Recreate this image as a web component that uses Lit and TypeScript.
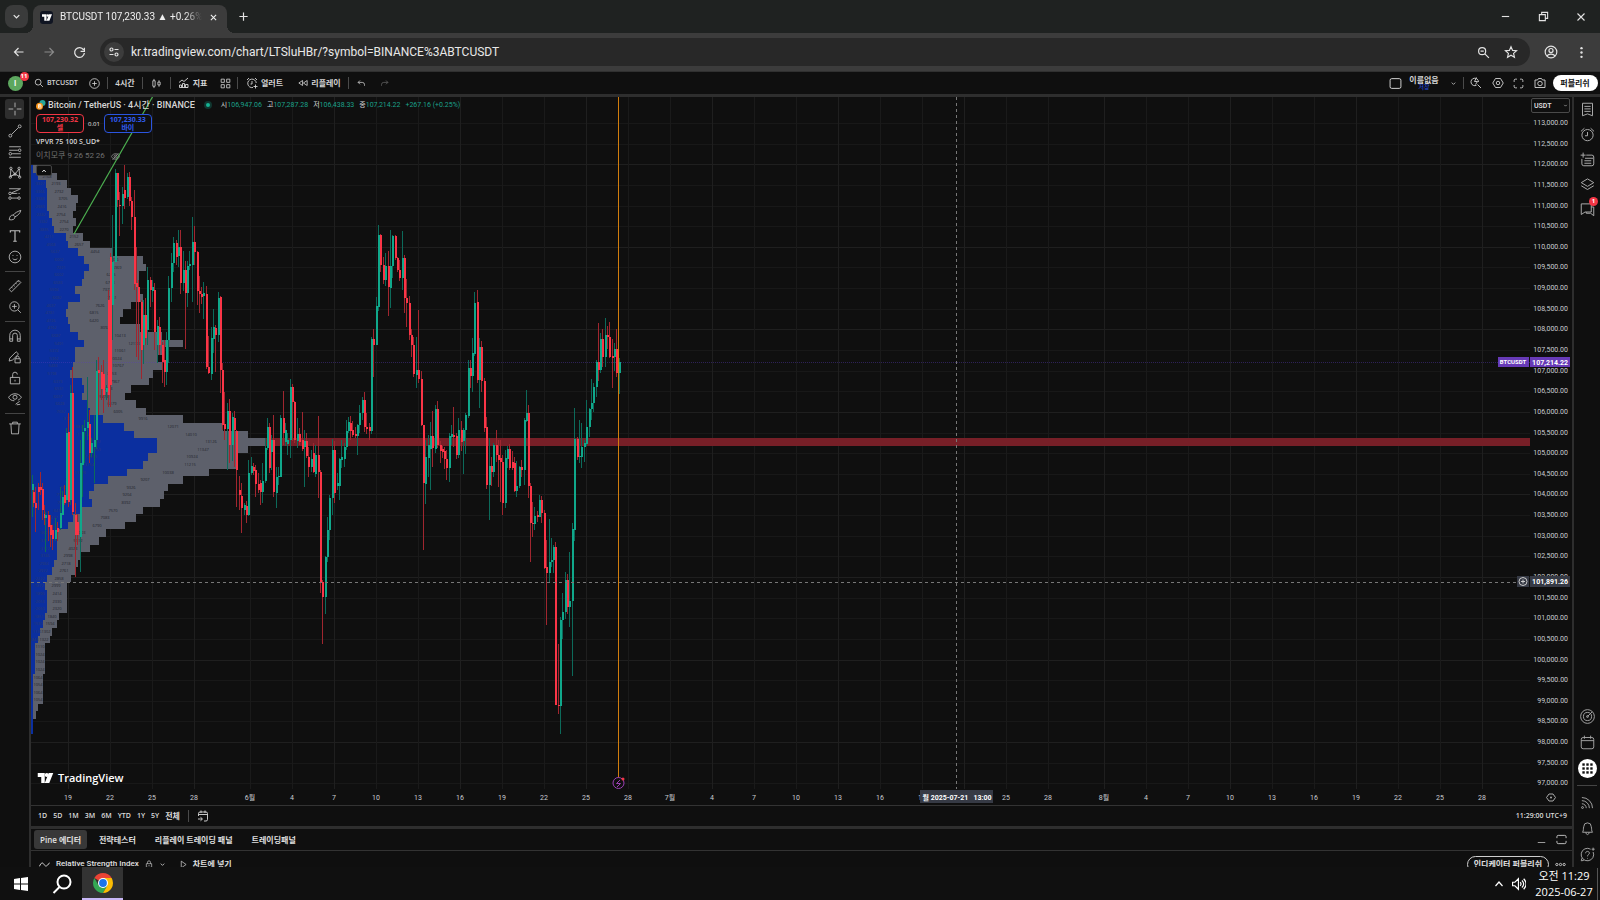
import { LitElement, html, css, svg, nothing } from "lit";
import { customElement } from "lit/decorators.js";

/* ---------- icons, drawn on a 24 unit canvas ---------- */
const ICONS: Record<string, unknown> = {
  chevron: svg`<path d="M6 9l6 6 6-6"/>`,
  chevronUp: svg`<path d="M5 16l7-8 7 8"/>`,
  close: svg`<path d="M5 5l14 14M19 5L5 19"/>`,
  plus: svg`<path d="M12 3v18M3 12h18"/>`,
  minus: svg`<path d="M4 12h16"/>`,
  low: svg`<path d="M2 20h20"/>`,
  restore: svg`<path d="M3 8h13v13H3zM8 8V3h13v13h-5"/>`,
  back: svg`<path d="M21 12H4M11 4l-8 8 8 8"/>`,
  forward: svg`<path d="M3 12h17M13 4l8 8-8 8"/>`,
  reload: svg`<path d="M19.5 7A9 9 0 1 0 21 13M21 3v7h-7"/>`,
  tune: svg`<circle cx="7" cy="7" r="3"/><path d="M13 7h8M3 17h8"/><circle cx="17" cy="17" r="3"/>`,
  zoomOut: svg`<circle cx="9.5" cy="9.5" r="6.5"/><path d="M14.5 14.5L22 22M6.5 9.5h6"/>`,
  star: svg`<path d="M12 3l2.700 6.200 6.800.6-5.100 4.500 1.500 6.600L12 17.400 6.100 20.900l1.500-6.600L2.500 9.800l6.800-.6z"/>`,
  user: svg`<circle cx="12" cy="12" r="10"/><circle cx="12" cy="9.500" r="3.500"/><path d="M5 18.500c3-4 11-4 14 0"/>`,
  dots: svg`<g fill="currentColor" stroke="none"><circle cx="12" cy="4" r="2.200"/><circle cx="12" cy="12" r="2.200"/><circle cx="12" cy="20" r="2.200"/></g>`,
  search: svg`<circle cx="10" cy="10" r="7"/><path d="M15 15l6.500 6.500"/>`,
  addCircle: svg`<circle cx="12" cy="12" r="10.500"/><path d="M12 7v10M7 12h10"/>`,
  candles: svg`<path d="M4 6h5v12H4zM6.500 2v4M6.500 18v4M15 9h5v6h-5zM17.500 5v4M17.500 15v4"/>`,
  indicators: svg`<path d="M3 21v-5h4v5M9 21v-8h4v8M15 21v-6h5v6zM2 11l6-5 4 3 8-7M3 21h17"/>`,
  grid: svg`<path d="M2.500 2.500h7v7h-7zM14.500 2.500h7v7h-7zM2.500 14.500h7v7h-7zM14.500 14.500h7v7h-7z"/>`,
  alarm: svg`<circle cx="12" cy="13" r="9"/><path d="M12 8v6H8M1.500 7l5.500-5M17 2l5.500 5"/>`,
  alarmAdd: svg`<path d="M14 21a8.500 8.500 0 1 1 6.500-9M12 8v6H9M2 6l4-4M18 2l4 4M19 15v8M15 19h8"/>`,
  rewind: svg`<path d="M11 6v12l-9-6zM22 6v12l-9-6z"/>`,
  undo: svg`<path d="M8 4L3 9l5 5M3 9h11a6 6 0 0 1 6 6v3"/>`,
  redo: svg`<path d="M16 4l5 5-5 5M21 9H10a6 6 0 0 0-6 6v3"/>`,
  square: svg`<rect x="2" y="3" width="20" height="18" rx="3"/>`,
  quick: svg`<path d="M17 10a7.500 7.500 0 1 0-4 6.500M15 15l7 7M13 1l-4 8h6l-4 6"/>`,
  hex: svg`<path d="M7 3h10l5.500 9L17 21H7l-5.500-9z"/><circle cx="12" cy="12" r="3.500"/>`,
  full: svg`<path d="M2.500 8.500v-3a3 3 0 0 1 3-3h3M15.500 2.500h3a3 3 0 0 1 3 3v3M21.500 15.500v3a3 3 0 0 1-3 3h-3M8.500 21.500h-3a3 3 0 0 1-3-3v-3"/>`,
  frame: svg`<path d="M2 9V6a3 3 0 0 1 3-3h14a3 3 0 0 1 3 3v3M22 15v3a3 3 0 0 1-3 3H5a3 3 0 0 1-3-3v-3"/>`,
  camera: svg`<path d="M2 6h5l2-3h6l2 3h5v15H2z"/><circle cx="12" cy="13" r="4.500"/>`,
  cross: svg`<path d="M12 1v8M12 15v8M1 12h8M15 12h8"/>`,
  trend: svg`<circle cx="4" cy="20" r="2.500"/><circle cx="20" cy="4" r="2.500"/><path d="M6 18L18 6"/>`,
  fib: svg`<path d="M2 3h20M2 9h15M7 15h15M2 21h20"/><circle cx="20" cy="9" r="2.200"/><circle cx="4" cy="15" r="2.200"/>`,
  pattern: svg`<path d="M4 18L5 5l7 9 7-9 1 13-8-4zM4 18l8-4"/><circle cx="4" cy="19" r="2"/><circle cx="5" cy="4" r="2"/><circle cx="12" cy="14" r="2"/><circle cx="19" cy="4" r="2"/><circle cx="20" cy="19" r="2"/>`,
  forecast: svg`<path d="M2 3h20M6 11h8M6 19h11M6 10l14-6"/><circle cx="3.500" cy="11" r="2.200"/><circle cx="3.500" cy="19" r="2.200"/><circle cx="19" cy="19" r="2.200"/><path d="M14 11h8" stroke-dasharray="2 2"/>`,
  brush: svg`<path d="M2 20c1-6 3-8 7-8l3 3c0 5-5 6-10 5zM9 12c3-4 8-6 13-8-1 5-5 9-10 11"/>`,
  text: svg`<path d="M4 6V3h16v3M12 3v18M9 21h6" stroke-width="2"/>`,
  smile: svg`<circle cx="12" cy="12" r="10"/><path d="M8 14.500c2 3 6 3 8 0M8.500 8.500v1.500M15.500 8.500v1.500"/>`,
  ruler: svg`<path d="M2 18L18 2l4 4L6 22zM6 14l2 2M9.500 10.500l2 2M13 7l2 2M16.500 3.500l2 2"/>`,
  zoomIn: svg`<circle cx="11" cy="11" r="8"/><path d="M17 17l5 5M7 11h8M11 7v8"/>`,
  magnet: svg`<path d="M3 21V11a9 9 0 0 1 18 0v10h-5V11a4 4 0 0 0-8 0v10zM3 17h5M16 17h5"/>`,
  penLock: svg`<path d="M2 19L3 14 14 3l4 4L8 17zM12 15h9v7h-9zM14 15v-2a2.500 2.500 0 0 1 5 0v2"/>`,
  lock: svg`<path d="M4 11h16v11H4zM8 11V6a4 4 0 0 1 8 0"/><path d="M12 15v3"/>`,
  padlock: svg`<path d="M4 11h16v11H4zM7.500 11V7a4.500 4.500 0 0 1 9 0v4M12 15v3"/>`,
  eye: svg`<path d="M1 9c5-8 17-8 22 0-2 3-4 4-6 5M1 9c2 4 5 6 10 6"/><circle cx="12" cy="9" r="3.500"/><path d="M13 21l7-5M15 22l6-1"/>`,
  trash: svg`<path d="M2 5h20M8 5V2h8v3M5 5l1 17h12l1-17"/>`,
  list: svg`<path d="M4 2h16v20l-8-3-8 3zM7 7h10M7 11h10M7 15h10"/>`,
  news: svg`<path d="M10 5h9a3 3 0 0 1 3 3v11a3 3 0 0 1-3 3H6a3 3 0 0 1-3-3v-8M8 10h13M7 14h11M7 18h11M5 1v8M1 5h8"/>`,
  layers: svg`<path d="M12 3l10 6-10 6L2 9zM2 14l10 6 10-6"/>`,
  chat: svg`<path d="M2 3h16v13H8l-6 4zM18 8h4v14l-5-4h-7v-2"/>`,
  target: svg`<circle cx="12" cy="12" r="11"/><circle cx="12" cy="12" r="6.500"/><circle cx="12" cy="12" r="1.500"/><path d="M12 12l7.500-7.500"/>`,
  calendar: svg`<rect x="2" y="4" width="20" height="18" rx="3"/><path d="M2 9h20M7 1v5M17 1v5"/>`,
  apps: svg`<circle cx="12" cy="12" r="12" fill="#fff" stroke="none"/><g fill="#0f0f0f" stroke="none">${[5.5, 10.5, 15.5].map(y => [5.5, 10.5, 15.5].map(x => svg`<rect x=${x} y=${y} width="3" height="3"/>`))}</g>`,
  feed: svg`<circle cx="4" cy="20" r="1.500"/><path d="M3 14a7 7 0 0 1 7 7M3 9a12 12 0 0 1 12 12M3 4a17 17 0 0 1 17 17"/>`,
  bell: svg`<path d="M4 18c2-2 1-6 2-9a6 6 0 0 1 12 0c1 3 0 7 2 9zM9.500 18c0 5 5 5 5 0"/>`,
  help: svg`<path d="M21 8a10 10 0 1 1-4-4.500M3 18l-1 4 4-.5M9 10c0-4 6-4 6 0 0 2-3 2-3 5M12 17.500v1M21 1v5M18.500 3.500h5"/>`,
  goTo: svg`<path d="M3 12V7a3 3 0 0 1 3-3h12a3 3 0 0 1 3 3v12a3 3 0 0 1-3 3h-4M3 9h18M8 1v5M16 1v5M2 18h8M7 14.500l4 3.500-4 3.500"/>`,
  wave: svg`<path d="M1 16c4-9 7-9 10-4s6 5 12-4"/>`,
  play: svg`<path d="M6 3l13 9-13 9z"/>`,
  eyeOff: svg`<path d="M1 12c5-10 17-10 22 0-5 10-17 10-22 0z"/><circle cx="12" cy="12" r="4"/><path d="M4 21L20 3"/>`,
  more: svg`<circle cx="4" cy="12" r="2.500"/><circle cx="12" cy="12" r="2.500"/><circle cx="20" cy="12" r="2.500"/>`,
  speaker: svg`<path d="M1 9h4l6-6v18l-6-6H1zM14 9c2 2 2 4 0 6M17 6c4 4 4 8 0 12M20 3c5.500 6 5.500 12 0 18"/>`,
};
const icon = (name: string, size = 14, weight = 1.6) => html`<svg width=${size} height=${size} viewBox="0 0 24 24"
  fill="none" stroke="currentColor" stroke-width=${weight} aria-hidden="true">${ICONS[name]}</svg>`;
const tvMark = svg`<path d="M0 0h14v20H7V8H0zM22 0h9l-8 20h-9z"/><circle cx="18" cy="4" r="4"/>`;

/* ---------- market data: colour, x, high, body top, body bottom, low ---------- */
const CANDLES = `r33,486,492,503,507 g32,475,484,490,517 r35,487,503,508,532 r38,483,487,492,510 r40,472,487,490,495 r42,483,489,510,520
r44,505,514,518,525 g45,512,515,518,552 r48,511,515,527,541 r50,515,525,535,547 r52,525,530,539,550 g55,518,530,539,541 r57,522,528,532,541
g60,487,513,528,530 g62,491,497,515,515 r64,485,495,503,505 g66,428,433,500,503 r68,413,432,502,507 g70,385,393,500,505 r72,367,393,512,515
r75,503,515,535,577 r77,514,522,535,545 g80,440,463,537,572 g82,425,432,465,497 g84,420,428,431,463 g87,377,422,428,440 r89,410,424,453,463
g91,438,443,453,457 g94,415,440,447,483 g96,360,371,440,449 r98,357,370,373,415 r101,365,372,389,400 r103,360,374,395,413 g106,385,388,392,400
r108,290,300,395,407 r110,253,257,385,407 g112,215,262,305,340 g115,169,173,262,262 r117,173,173,200,207 r119,192,205,206,236 g122,187,194,206,224
r124,165,190,198,209 g127,173,177,197,199 r129,172,177,201,206 r131,197,201,217,230 r134,190,217,284,290 r136,247,283,287,357 r138,280,287,302,360
r141,300,302,350,379 g143,300,315,345,364 r145,298,315,338,345 g147,267,280,330,345 r150,277,280,290,307 g152,280,287,291,302 r154,283,290,332,350
g157,320,326,345,363 r159,317,327,345,355 r162,342,345,362,383 r164,340,360,372,387 g166,332,340,372,385 g168,276,288,340,363 g171,253,263,288,302
g173,237,243,263,272 r176,240,243,257,265 g178,230,247,256,267 r180,230,247,283,294 g183,251,270,283,291 r185,261,270,293,349 g187,261,266,293,307
g189,251,264,266,270 g192,217,242,265,302 r194,226,242,252,265 r197,251,252,291,305 r199,276,291,294,313 r201,287,294,297,304 g203,282,293,296,319
r206,286,294,367,369 r208,336,367,373,374 g211,327,338,374,380 g213,309,327,339,353 r215,325,328,335,372 g218,292,298,335,342 r220,296,297,370,393
r222,363,370,425,430 r224,392,424,429,440 g227,403,411,429,470 r229,399,411,445,463 g232,413,417,445,461 r234,411,418,430,467 r236,430,431,470,507
r239,476,490,495,510 r241,483,496,508,533 g244,503,505,510,515 r246,501,506,515,523 g248,460,473,515,516 g251,457,466,473,475 r253,463,467,471,475
r255,465,470,484,497 r258,473,484,490,493 r260,480,483,492,505 g262,463,481,492,503 g265,438,448,481,483 g267,418,427,448,450 r269,423,427,468,473
g271,435,440,452,470 r273,415,440,492,497 g276,467,477,493,508 g278,467,476,477,485 g280,415,418,477,477 r283,391,418,433,445 g285,423,430,442,446
g287,433,440,444,455 g290,379,387,440,458 r292,384,387,402,441 r294,401,402,440,443 g297,418,434,441,448 r299,428,434,442,445 r302,412,440,449,451
g304,430,441,447,487 r306,433,441,456,458 r308,447,457,467,477 g311,450,459,467,472 r313,443,453,472,473 g315,445,455,474,477 r318,416,455,472,498
r320,470,472,582,593 r322,580,582,597,644 g325,556,557,597,614 g327,517,530,557,562 g329,495,498,530,540 g332,439,450,498,515 r334,441,450,493,503
g337,473,483,486,490 g339,458,459,486,500 g341,440,457,460,468 g344,443,447,459,467 g346,420,431,447,450 g348,417,422,431,433 r350,416,423,431,440
r352,421,430,435,437 r355,427,434,436,438 g357,424,425,436,455 g359,405,413,425,433 g362,397,400,413,420 r364,392,400,427,432 r366,413,427,429,434
r369,423,427,431,440 g371,337,339,431,434 r373,329,339,345,377 g376,297,306,345,345 g378,225,235,307,311 r380,234,235,265,272 r383,257,265,280,284
g385,253,266,280,286 r388,251,266,287,316 g390,230,266,288,308 g392,235,236,266,278 r395,235,236,258,260 r397,257,258,270,272 r399,260,270,278,281
g402,231,258,278,290 r404,255,258,298,313 r406,279,298,303,327 r409,296,303,335,340 r411,329,335,345,357 r413,337,345,374,377 g416,337,370,375,388
r418,310,370,379,383 r421,371,379,425,426 r423,425,425,483,550 g425,440,457,484,504 g428,435,445,458,477 g430,422,436,449,490 r432,411,436,448,467
g435,405,409,449,453 r437,401,409,445,448 r440,441,445,451,463 r442,446,449,452,458 r444,447,451,459,469 r446,450,459,468,480 g449,433,436,468,482
g451,425,434,437,445 r453,407,435,437,447 r456,433,436,455,459 g458,418,430,455,458 r461,421,430,442,451 g463,428,430,441,474 g465,413,415,430,454
g468,360,368,416,418 r470,360,368,376,388 g472,338,353,376,392 g474,292,303,354,356 r477,290,302,380,383 g479,338,347,380,408 r481,341,347,381,392
r484,378,381,428,432 r486,417,427,485,489 g489,438,466,485,520 r491,457,466,472,486 g493,443,445,472,477 r496,430,445,455,462 r498,440,455,460,487
r500,440,458,462,502 r502,455,462,503,515 g505,450,458,503,508 g507,446,449,459,468 r509,444,449,468,470 r512,451,462,468,470 r514,457,463,491,492
g516,461,486,491,497 g519,466,467,486,488 r521,460,467,470,477 g524,418,420,470,485 g526,390,413,421,422 r528,405,413,486,498 r530,483,486,523,562
r532,502,523,524,537 g534,507,516,524,530 r537,511,515,517,522 g539,495,500,517,517 r541,496,500,513,523 r544,510,513,568,569 r546,540,567,573,625
g549,519,562,573,583 g551,538,560,562,567 g553,545,547,560,573 r555,542,547,705,705 r558,644,705,706,714 g560,617,620,706,734 g562,593,612,620,639
g565,572,580,612,619 r567,574,580,607,614 g569,552,601,607,627 g572,523,529,601,676 g574,408,439,530,541 r577,437,439,457,460 g579,420,456,457,463
g581,423,447,457,468 g584,440,443,447,462 g586,400,427,444,446 g589,408,409,427,437 g591,379,403,409,420 g593,383,387,403,412 g596,360,362,387,397
r598,323,362,370,381 g600,333,339,370,373 r602,329,339,357,367 g605,318,335,357,367 r607,326,335,337,349 r609,322,337,357,358 r612,339,356,358,388
g614,343,349,357,371 r616,329,349,373,377 g619,358,362,373,394`
  .split(/\s+/).map(t => ({ up: t[0] === "g", v: t.slice(1).split(",").map(Number) }));

/* volume profile, three units per pixel: blue end, grey end, grey volume, blue volume */
const PROFILE = `100,115 113,171,2168 138,200,2193,3327 140,213,2732,3366 140,235,3705,3388 140,229,2416,2983 147,219,2754,2242 156,229,2754,3382 163,219,2270,3835
197,248,2152,4211 205,270,2657,4568 233,339,4454,5637 252,430,7376,6002 267,437,6969,7221 252,416,6235,6602 246,416,6703,6583 226,418,7373,5594
240,430,7461,6082 205,394,7626,4637 198,368,6815,4781 205,360,6420,4726 210,420,8092,4762 234,485,10413,6087 252,549,12133,5491 226,492,11061,5374
226,472,10024,5362 220,485,10767,5483 211,458,8153,5198 246,446,7967,6373 252,394,6133,6531 246,375,5473,6657 262,409,6179,6628 269,437,6005,7082
309,549,9916,8161 372,668,12071,10870 401,744,14010,11266 471,795,13126,16402 471,744,11347,16069 444,708,10924,14639 429,708,11215,13754
380,626,10038,11120 323,549,9207,9262 282,505,9326,7893 268,492,9204,7133 275,480,8392,7402 246,430,7570,6412 218,409,7083,5477 205,375,6790,4931
170,318,5703,3694 170,298,5112,3761 170,270,4023,3722 170,240,2998,3746 163,235,2718,2984 157,228,2761,2972 141,213,2858,2222 135,200,2999,1872
141,200,2414,1890 141,200,2330,2053 141,200,2320,2050 135,177,1840,1851 130,170,1594,1530 120,157,1302,1136 113,150,1322,848 106,134,1110 106,134,1024
106,134,1024 106,134,1024 99,129,1064 99,129,1054 99,129,1064 99,129,1054 99,114 99,107 99,99 99,99`
  .split(/\s+/).map(t => t.split(",").map(Number));

const DAY = 14;
const START = 68;
const DATES: [string, number][] = [];
{
  const labels = "19 22 25 28 6월 4 7 10 13 16 19 22 25 28 7월 4 7 10 13 16 19 22 25 28 8월 4 7 10 13 16 19 22 25 28".split(" ");
  let day = 0;
  labels.forEach((l, i) => {
    if (i) day += l === "6월" || l === "8월" ? 4 : 3;
    DATES.push([l, START + day * DAY]);
  });
}
const CURSOR = 957;
const ROW = 20.635;
const PRICES = Array.from({ length: 33 }, (_, i) => [113000 - i * 500, 123 + i * ROW] as const);
const fmt = (n: number) => n.toLocaleString("en-US", { minimumFractionDigits: 2 });

@customElement("price-chart")
class PriceChart extends LitElement {
  static styles = css`
    :host { display: block; position: relative; flex: 1; min-height: 0; overflow: hidden; }
    svg { flex: none; display: block; }
    .canvas { position: absolute; width: 100%; height: 100%; }
    .axis { font: 7px Roboto, "Noto Sans CJK KR", sans-serif; fill: #c9cbd0; }
    .strong { font-weight: 700; fill: #fff; }
    .small { font-size: 6px; }
    .mid { text-anchor: middle; }
    .volume { font: 4px "Open Sans", sans-serif; fill: #23252c; text-anchor: middle; }
    .dim { fill: #2a3a74; }
    .legend { position: absolute; left: 5px; top: 3px; display: flex; flex-direction: column; align-items: flex-start; gap: 4px;
      color: #d6d6d6; font: 7px/10px "Open Sans", "Noto Sans CJK KR", sans-serif; }
    .row { display: flex; align-items: center; height: 10px; white-space: nowrap; }
    .coins { margin-right: 2px; }
    .title { font: 500 9px/10px Roboto, "Noto Sans CJK KR", sans-serif; }
    .live { width: 4px; height: 4px; border: 2px solid #10362f; border-radius: 50%; background: #16b394; margin: 0 9px; }
    .ohlc { display: flex; gap: 5px; font-family: Roboto, "Noto Sans CJK KR", sans-serif; }
    .ohlc b { color: #1ba08a; font-weight: 400; }
    .trade { display: flex; align-items: center; gap: 4px; font-size: 6px; color: #eee; }
    .quote { width: 48px; height: 19px; border: 1px solid #f23645; border-radius: 4px; background: #0f0f0f; color: #f23645;
      font: 700 7px/8px "Open Sans", "Noto Sans CJK KR", sans-serif; padding: 0; display: flex; flex-direction: column; align-items: center; justify-content: center; }
    .quote.buy { border-color: #2b55e0; color: #2f5cf0; }
    .study { font-weight: 600; }
    .hidden { color: #6f6f6f; gap: 6px; font-size: 8px; font-family: Roboto, "Noto Sans CJK KR", sans-serif; }
    .hidden svg { color: #999; }
    .fold { width: 16px; height: 11px; border: 1px solid #444; border-radius: 2px; background: #0f0f0f; color: #ddd; padding: 0;
      display: flex; align-items: center; justify-content: center; }
    .currency { position: absolute; top: 1px; right: 2px; width: 39px; height: 15px; appearance: none; border: 1px solid #4a4a4a;
      border-radius: 2px; background: #0f0f0f; color: #ddd; font: 600 7px Roboto, sans-serif; padding: 0 2px; }
    .arrow { position: absolute; top: 6px; right: 4px; color: #ccc; pointer-events: none; }
    .brand { position: absolute; left: 6px; bottom: 20px; display: flex; align-items: center; gap: 4px; color: #fff; fill: #fff;
      font: 600 11px/14px "Open Sans", sans-serif; text-decoration: none; }
  `;

  private drawing() {
    const labels = DATES.filter(([, x]) => Math.abs(x - CURSOR) > 30);
    return svg`
      <g shape-rendering="crispEdges">
        ${PRICES.map(([p, y]) => svg`<rect x="31" y=${Math.round(y)} width="1499" height="1" fill=${p % 2000 === 0 ? "#1f1f1f" : "#181818"}/>`)}
        ${DATES.map(([, x], i) => svg`<rect x=${x} y="97" width="1" height="692" fill=${i % 3 ? "#1a1a1a" : "#1f1f1f"}/>`)}
        <rect x="265" y="438" width="1265" height="8" fill="#771f27"/>
        ${PROFILE.map(([b, g], i) => {
          const y = Math.round(165 + i * 7.59);
          const h = Math.round(165 + (i + 1) * 7.59) - y;
          return svg`<rect x="31" y=${y} width=${Math.round(g / 3) - 31} height=${h} fill="#5d606b"/>
            <rect x="31" y=${y} width=${Math.round(b / 3) - 31} height=${h} fill="#0b2f9f"/>`;
        })}
      </g>
      ${PROFILE.map(([b, g, n, m], i) => svg`
        ${n ? svg`<text class="volume" x=${Math.round((b + g) / 6)} y=${Math.round(170 + i * 7.59)}>${n}</text>` : nothing}
        ${m ? svg`<text class="volume dim" x=${Math.round((b + 93) / 6) + 1} y=${Math.round(170 + i * 7.59)}>${m}</text>` : nothing}`)}
      <path d="M31 362.500H1530" stroke="#5b3bc0" stroke-opacity=".4" stroke-dasharray="1 1"/>
      <g shape-rendering="crispEdges">
        ${CANDLES.map(({ up, v: [x, h, t, b, l] }) => svg`
          <rect x=${x} y=${h} width="1" height=${l - h} fill=${up ? "#0c6a5a" : "#a0262f"}/>
          <rect x=${x} y=${t} width="2" height=${Math.max(1, b - t)} fill=${up ? "#10a88b" : "#fb3547"}/>`)}
      </g>
      <path d="M74 234L153 96" stroke="#4caf50" stroke-width="1.200"/>
      <rect x="618" y="97" width="1" height="681" fill="#d17d0d"/>
      <path d="M31 582.500H1530M956.500 97V789" stroke="#777" stroke-dasharray="3 3" fill="none"/>
      <g fill="none" stroke="#9c3fb5"><circle cx="618.500" cy="783" r="5.500" fill="#0f0f0f"/><path d="M620 780l-3.500 3.500h4l-3.500 3.500"/></g>
      <circle cx="623" cy="779" r="1.500" fill="#f23645"/>
      <rect x="1530" y="97" width="60" height="708" fill="#0f0f0f"/>
      ${PRICES.map(([p, y]) => svg`<text class="axis" x="1568" text-anchor="end" y=${Math.round(y + 2)}>${fmt(p)}</text>`)}
      ${labels.map(([l, x]) => svg`<text class="axis mid" x=${x} y="800">${l}</text>`)}
      <rect x="920" y="790" width="73" height="13" fill="#363a45"/>
      <text class="axis strong mid" x=${CURSOR} y="800" xml:space="preserve">월 2025-07-21   13:00</text>
      <rect x="1498" y="357" width="31" height="10" fill="#673ab7"/><rect x="1530" y="357" width="40" height="10" fill="#673ab7"/>
      <text class="axis strong small mid" x="1513" y="364">BTCUSDT</text>
      <text class="axis strong" x="1568" text-anchor="end" y="365">107,214.22</text>
      <rect x="1517" y="576" width="12" height="11" fill="#363a45"/><rect x="1530" y="576" width="40" height="11" fill="#363a45"/>
      <g fill="none" stroke="#ccc"><circle cx="1523" cy="581.500" r="4"/><path d="M1521 581.500h4M1523 579.500v4"/></g>
      <text class="axis strong" x="1568" text-anchor="end" y="584">101,891.26</text>
      <path d="M1549 794h4l2.500 3.500-2.500 3.500h-4l-2.500-3.500z" fill="none" stroke="#aaa"/><circle cx="1551" cy="797.500" r="1" fill="#aaa"/>`;
  }

  render() {
    return html`
      <svg class="canvas" role="img" aria-label="BTCUSDT 4시간 차트"><g transform="translate(-31 -97)">${this.drawing()}</g></svg>
      <div class="legend">
        <div class="row">
          <svg class="coins" width="10" height="10" viewBox="0 0 20 20"><circle cx="13" cy="6" r="6" fill="#26a69a"/><circle cx="7" cy="12.500" r="7" fill="#f7931a"/><path d="M5 9h3.500c2 0 2 3 0 3H5h4c2 0 2 4 0 4H5z" fill="none" stroke="#fff" stroke-width="1.500"/></svg>
          <span class="title">Bitcoin / TetherUS · 4시간 · BINANCE</span><i class="live"></i>
          <span class="ohlc"><span>시<b>106,947.06</b></span><span>고<b>107,287.28</b></span><span>저<b>106,438.33</b></span><span>종<b>107,214.22</b></span><b>+267.16 (+0.25%)</b></span>
        </div>
        <div class="trade">
          <button class="quote">107,230.32<span>셀</span></button>0.01<button class="quote buy">107,230.33<span>바이</span></button>
        </div>
        <div class="row study">VPVR 75 100 S_UD*</div>
        <div class="row hidden">이치모쿠 9 26 52 26 ${icon("eyeOff", 9, 2)}</div>
        <button class="fold" aria-label="접기">${icon("chevronUp", 6, 4)}</button>
      </div>
      <select class="currency" aria-label="통화"><option>USDT</option></select><span class="arrow">${icon("chevron", 5, 3)}</span>
      <a class="brand" href="#"><svg width="17" height="10" viewBox="0 0 31 20">${tvMark}</svg>TradingView</a>`;
  }
}

@customElement("app-root")
class AppRoot extends LitElement {
  static styles = css`
    :host { display: flex; flex-direction: column; height: 100vh; overflow: hidden; background: #0f0f0f; color: #dbdbdb;
      font: 7px/10px "Open Sans", "Noto Sans CJK KR", sans-serif; }
    button { font: inherit; color: inherit; background: none; border: 0; padding: 0; display: flex; align-items: center; justify-content: center; white-space: nowrap; }
    svg { flex: none; display: block; }
    .grow { flex: 1; }
    .ko { font-size: 8px; }
    .strip { height: 33px; background: #1f2221; display: flex; align-items: flex-start; color: #e3e3e3; flex: none; }
    .tabmenu { width: 23px; height: 23px; border-radius: 8px; background: #3a3b3b; margin: 5px; }
    .tab { position: relative; width: 194px; height: 28px; margin-top: 5px; border-radius: 8px 8px 0 0; background: #3c3c3c; display: flex; align-items: center;
      font-size: 11px; padding: 0 9px 4px 7px; gap: 7px; box-sizing: border-box; color: #eee; }
    .tab::before, .tab::after { content: ""; position: absolute; bottom: 0; width: 8px; height: 8px; }
    .tab::before { left: -8px; background: radial-gradient(circle at 0 0, transparent 8px, #3c3c3c 8px); }
    .tab::after { right: -8px; background: radial-gradient(circle at 100% 0, transparent 8px, #3c3c3c 8px); }
    .favicon { width: 13px; height: 13px; border-radius: 3px; background: #101522; fill: #fff; display: flex; align-items: center; justify-content: center; }
    .tabtitle { flex: 1; overflow: hidden; white-space: nowrap; font: 10px/16px Roboto, sans-serif; mask-image: linear-gradient(90deg, #000 88%, transparent); }
    .newtab { width: 32px; height: 33px; }
    .window { width: 38px; height: 33px; }
    .nav { height: 39px; background: #3c3c3c; display: flex; align-items: center; flex: none; color: #e3e3e3; padding: 0 4px 0 4px; border-bottom: 1px solid #303030; box-sizing: border-box; }
    .nav > button { width: 30px; height: 28px; }
    .nav > button:disabled { color: #8a8a8a; }
    .omni { flex: 1; height: 28px; border-radius: 14px; background: #282828; display: flex; align-items: center; margin: 0 6px; padding: 0 6px 0 4px; }
    .omni button { width: 27px; height: 20px; }
    .omni .site { width: 20px; border-radius: 50%; background: #3c3c3c; }
    .url { flex: 1; min-width: 0; background: none; border: 0; outline: 0; color: #e8e8e8; font: 12px/20px Roboto, sans-serif; padding: 0 7px; }
    .top { height: 22px; display: flex; align-items: center; flex: none; background: #0f0f0f; font-weight: 600; color: #d5d5d5; }
    .tools { display: grid; grid-template-columns: 30px 52px 25px 1px 34px 1px 27px 1px 43px 23px 1px 53px 57px 1px 25px 20px; justify-items: center; align-items: center; }
    .tools button, .actions button { gap: 3px; }
    .bar { width: 1px; height: 12px; background: #4a4a4a; }
    .me { position: relative; width: 15px; height: 15px; border-radius: 50%; background: #5da75f; color: #fff; font-size: 9px; }
    .badge { position: absolute; top: -4px; right: -6px; min-width: 7px; height: 9px; padding: 0 1px; border-radius: 5px; background: #f23645; color: #fff; font: 700 6px/9px "Open Sans", sans-serif; text-align: center; }
    .faint { color: #666; }
    .actions { display: grid; grid-template-columns: 20px 38px 20px 1px 23px 21px 21px 21px 50px; justify-items: center; align-items: center; }
    .layout { display: flex; flex-direction: column; line-height: 8px; align-items: center; }
    .layout button { color: #2450e8; font-size: 6px; line-height: 6px; font-weight: 400; }
    .publish { background: #fff; color: #111; border-radius: 8px; width: 45px; height: 16px; font-weight: 700; }
    .work { flex: 1; display: flex; min-height: 0; border-top: 3px solid #2e2e2e; }
    .left { width: 29px; border-right: 2px solid #2e2e2e; display: flex; flex-direction: column; align-items: center; padding-top: 2px; flex: none; color: #bdbdbd; }
    .left button { width: 19px; height: 21px; border-radius: 3px; flex: none; }
    .left .on { background: #2e2e2e; height: 20px; margin-bottom: 1px; }
    .rule { width: 20px; height: 1px; background: #444; margin: 4px 0 3px; flex: none; }
    .center { flex: 1; min-width: 0; display: flex; flex-direction: column; }
    .right { width: 26px; border-left: 2px solid #2e2e2e; display: flex; flex-direction: column; align-items: center; flex: none; color: #a8a8a8; }
    .right button { position: relative; width: 20px; height: 25px; flex: none; }
    .right .low { height: 26px; }
    .right .badge { top: 0; right: -1px; }
    .ranges { height: 20px; border-top: 1px solid #333; border-bottom: 3px solid #2e2e2e; display: flex; align-items: center; flex: none; padding: 0 5px 0 7px; gap: 6px; font-weight: 600; }
    .ranges .bar { margin: 0 2px; }
    .panels { height: 21px; display: flex; align-items: center; gap: 19px; border-bottom: 1px solid #333; padding: 0 5px 0 3px; flex: none; font-weight: 600; color: #e0e0e0; }
    .panels .on { background: #383838; border-radius: 3px; height: 19px; padding: 0 6px; margin-right: -7px; }
    .pair { display: flex; gap: 10px; }
    .script { height: 16px; overflow: hidden; flex: none; }
    .inner { height: 26px; display: flex; align-items: center; gap: 6px; padding: 0 6px 0 8px; font-weight: 600; color: #e0e0e0; }
    .name { font: 500 8px/10px Roboto, sans-serif; }
    .insert { gap: 5px; margin-left: 7px; }
    .outline { border: 1px solid #cfcfcf; border-radius: 9px; height: 17px; padding: 0 6px; }
    .task { height: 33px; display: flex; align-items: center; flex: none; background: #101010; color: #fff; }
    .task button { width: 41px; height: 33px; }
    .task .active { background: #333; border-bottom: 2px solid #c9b8f7; box-sizing: border-box; }
    .task .tray { width: 20px; }
    .clock { width: 66px; font-size: 11px; line-height: 16px; text-align: center; border-right: 1px solid #555; margin: 0 2px; }
  `;

  private tool = (name: string) => name === "-" ? html`<i class="rule"></i>`
    : html`<button class=${name === "cross" ? "on" : ""} aria-label=${name}>${icon(name, 14, 1.5)}</button>`;

  render() {
    return html`
      <header class="strip">
        <button class="tabmenu" aria-label="탭 검색">${icon("chevron", 11, 3)}</button>
        <div class="tab">
          <span class="favicon"><svg width="10" height="7" viewBox="0 0 31 20">${tvMark}</svg></span>
          <span class="tabtitle">BTCUSDT 107,230.33 ▲ +0.26%</span>
          <button aria-label="탭 닫기">${icon("close", 9, 3)}</button>
        </div>
        <button class="newtab" aria-label="새 탭">${icon("plus", 11, 2.6)}</button>
        <span class="grow"></span>
        <button class="window" aria-label="최소화">${icon("minus", 11, 2.4)}</button>
        <button class="window" aria-label="복원">${icon("restore", 11, 2.4)}</button>
        <button class="window" aria-label="닫기">${icon("close", 12, 2.2)}</button>
      </header>
      <nav class="nav">
        <button aria-label="뒤로">${icon("back", 12, 2.4)}</button>
        <button aria-label="앞으로" disabled>${icon("forward", 12, 2.4)}</button>
        <button aria-label="새로고침">${icon("reload", 13, 2.4)}</button>
        <div class="omni">
          <button class="site" aria-label="사이트 정보">${icon("tune", 12, 2.4)}</button>
          <input class="url" aria-label="주소" value="kr.tradingview.com/chart/LTSluHBr/?symbol=BINANCE%3ABTCUSDT" />
          <button aria-label="축소">${icon("zoomOut", 13, 2.2)}</button>
          <button aria-label="북마크">${icon("star", 14, 2)}</button>
        </div>
        <button aria-label="프로필">${icon("user", 14, 2)}</button>
        <button aria-label="메뉴">${icon("dots", 13)}</button>
      </nav>
      <div class="top">
        <div class="tools">
          <button class="me">I<span class="badge">11</span></button>
          <button>${icon("search", 10, 2)}BTCUSDT</button>
          <button aria-label="비교">${icon("addCircle", 11, 1.8)}</button>
          <i class="bar"></i><button class="ko">4시간</button><i class="bar"></i>
          <button aria-label="캔들">${icon("candles", 11, 1.8)}</button><i class="bar"></i>
          <button class="ko">${icon("indicators", 12, 1.8)}지표</button>
          <button aria-label="템플릿">${icon("grid", 11, 1.8)}</button><i class="bar"></i>
          <button class="ko">${icon("alarmAdd", 12, 1.8)}얼러트</button>
          <button class="ko">${icon("rewind", 10, 2)}리플레이</button><i class="bar"></i>
          <button aria-label="실행취소">${icon("undo", 9, 2)}</button>
          <button class="faint" aria-label="다시실행">${icon("redo", 9, 2)}</button>
        </div>
        <span class="grow"></span>
        <div class="actions">
          <button aria-label="레이아웃">${icon("square", 13, 1.8)}</button>
          <div class="layout ko"><span>이름없음</span><button>저장</button></div>
          <button aria-label="레이아웃 관리">${icon("chevron", 7, 2.6)}</button><i class="bar"></i>
          <button aria-label="빠른 검색">${icon("quick", 12, 1.8)}</button>
          <button aria-label="설정">${icon("hex", 12, 1.8)}</button>
          <button aria-label="전체 화면">${icon("full", 11, 2)}</button>
          <button aria-label="스냅샷">${icon("camera", 12, 1.8)}</button>
          <button class="publish ko">퍼블리쉬</button>
        </div>
      </div>
      <main class="work">
        <div class="left">${["cross", "trend", "fib", "pattern", "forecast", "brush", "text", "smile", "-", "ruler", "zoomIn", "-", "magnet", "penLock", "lock", "eye", "-", "trash"].map(this.tool)}</div>
        <div class="center">
          <price-chart></price-chart>
          <div class="ranges">
            ${["1D", "5D", "1M", "3M", "6M", "YTD", "1Y", "5Y"].map(r => html`<button>${r}</button>`)}<button class="ko">전체</button>
            <i class="bar"></i><button aria-label="날짜로 이동">${icon("goTo", 12, 1.8)}</button>
            <span class="grow"></span><button>11:29:00 UTC+9</button>
          </div>
          <div class="panels ko">
            <button class="on">Pine 에디터</button><button>전략테스터</button><button>리플레이 트레이딩 패널</button><button>트레이딩패널</button>
            <span class="grow"></span>
            <span class="pair"><button aria-label="패널 최소화">${icon("low", 9, 1.8)}</button><button aria-label="패널 최대화">${icon("frame", 11, 1.8)}</button></span>
          </div>
          <div class="script"><div class="inner">
            ${icon("wave", 11, 2)}<span class="name">Relative Strength Index</span>${icon("padlock", 8, 1.8)}${icon("chevron", 7, 2.6)}
            <button class="insert ko">${icon("play", 9, 1.8)}차트에 넣기</button>
            <span class="grow"></span><button class="outline ko">인디케이터 퍼블리쉬</button><button aria-label="더보기">${icon("more", 11, 1.8)}</button>
          </div></div>
        </div>
        <aside class="right">
          ${["list", "alarm", "news", "layers"].map(n => html`<button aria-label=${n}>${icon(n, 15, 1.6)}</button>`)}
          <button aria-label="chat">${icon("chat", 15, 1.6)}<span class="badge">1</span></button>
          <span class="grow"></span>
          ${["target", "calendar"].map(n => html`<button class="low" aria-label=${n}>${icon(n, 15, 1.5)}</button>`)}
          <button class="low" aria-label="apps">${icon("apps", 19)}</button><i class="rule"></i>
          ${["feed", "bell", "help"].map(n => html`<button class="low" aria-label=${n}>${icon(n, 15, 1.5)}</button>`)}
        </aside>
      </main>
      <footer class="task">
        <button aria-label="시작"><svg width="14" height="14" viewBox="0 0 14 14" fill="#fff"><path d="M0 2l6-1v5.600H0zM7 .9L14 0v6.600H7zM0 7.500h6V13l-6-.9zM7 7.500h7V14l-7-.9z"/></svg></button>
        <button aria-label="검색"><svg width="20" height="20" viewBox="0 0 20 20" fill="none" stroke="#fff" stroke-width="2"><circle cx="12" cy="8" r="6.500"/><path d="M7.500 13L1.500 19"/></svg></button>
        <button class="active" aria-label="Chrome"><svg width="20" height="20" viewBox="0 0 20 20"><path d="M10 10L1.340 5A10 10 0 0 1 18.660 5z" fill="#ea4335"/><path d="M1.340 5A10 10 0 0 0 10 20L14.300 12.500 10 10 5.700 12.500z" fill="#34a853"/><path d="M18.660 5A10 10 0 0 1 10 20L14.300 12.500 10 10V5z" fill="#fbbc04"/><circle cx="10" cy="10" r="5" fill="#fff"/><circle cx="10" cy="10" r="3.900" fill="#1a73e8"/></svg></button>
        <span class="grow"></span>
        <button class="tray" aria-label="숨겨진 아이콘">${icon("chevronUp", 12, 2.4)}</button>
        <button class="tray" aria-label="볼륨">${icon("speaker", 14, 2)}</button>
        <time class="clock" datetime="2025-06-27T11:29">오전 11:29<br />2025-06-27</time>
      </footer>`;
  }
}
